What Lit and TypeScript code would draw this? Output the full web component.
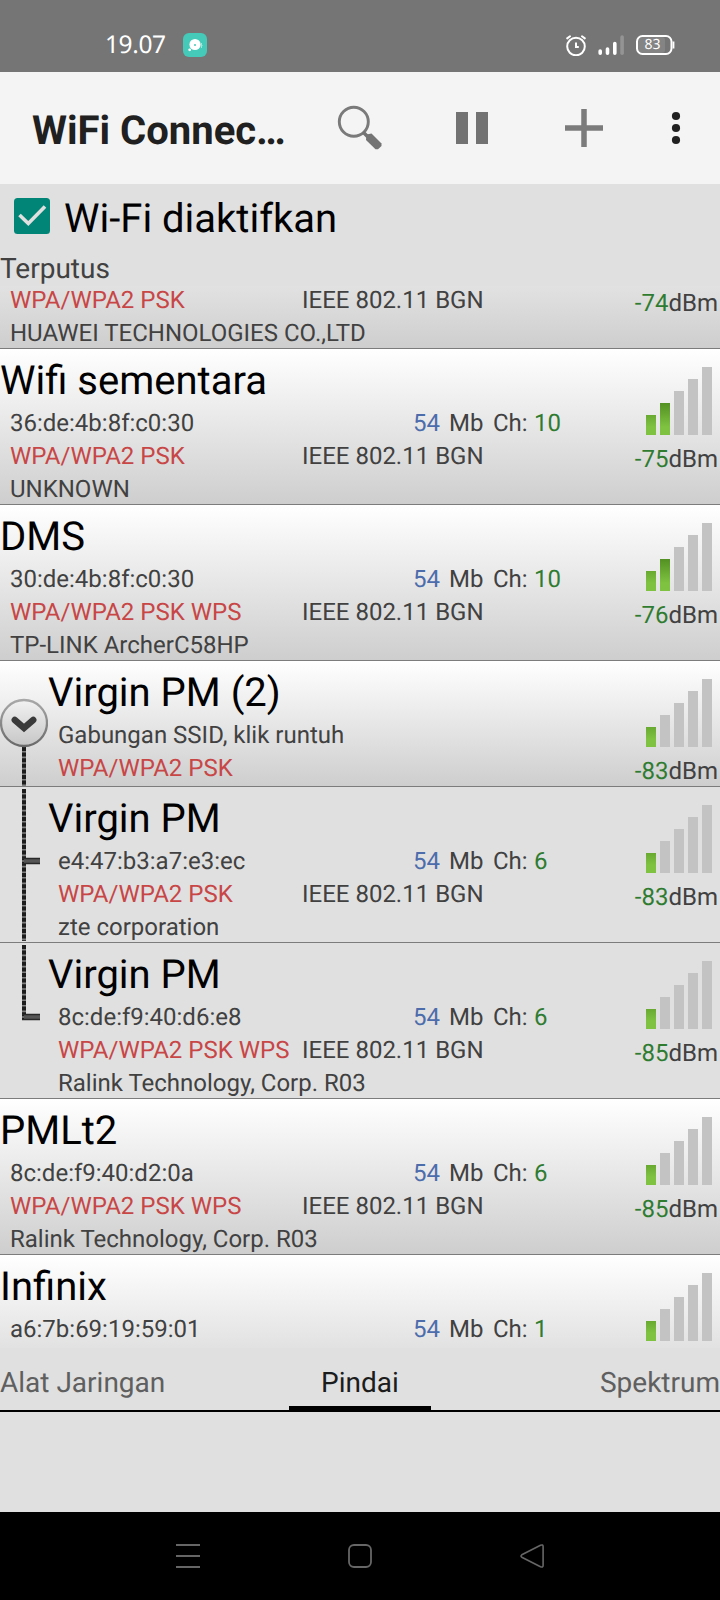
import { LitElement, html, css, svg, nothing } from "lit";
import { customElement, property } from "lit/decorators.js";

interface Network {
  name: string;
  bssid?: string;
  security?: string;
  channel?: string;
  vendor?: string;
  dbm?: number;
  level: number;
  kind?: "group" | "child" | "last";
}

const NETWORKS: Network[] = [
  { name: "", security: "WPA/WPA2 PSK", vendor: "HUAWEI TECHNOLOGIES CO.,LTD", dbm: -74, level: 2 },
  { name: "Wifi sementara", bssid: "36:de:4b:8f:c0:30", security: "WPA/WPA2 PSK", channel: "10", vendor: "UNKNOWN", dbm: -75, level: 2 },
  { name: "DMS", bssid: "30:de:4b:8f:c0:30", security: "WPA/WPA2 PSK WPS", channel: "10", vendor: "TP-LINK ArcherC58HP", dbm: -76, level: 2 },
  { name: "Virgin PM (2)", bssid: "Gabungan SSID, klik runtuh", security: "WPA/WPA2 PSK", dbm: -83, level: 1, kind: "group" },
  { name: "Virgin PM", bssid: "e4:47:b3:a7:e3:ec", security: "WPA/WPA2 PSK", channel: "6", vendor: "zte corporation", dbm: -83, level: 1, kind: "child" },
  { name: "Virgin PM", bssid: "8c:de:f9:40:d6:e8", security: "WPA/WPA2 PSK WPS", channel: "6", vendor: "Ralink Technology, Corp. R03", dbm: -85, level: 1, kind: "last" },
  { name: "PMLt2", bssid: "8c:de:f9:40:d2:0a", security: "WPA/WPA2 PSK WPS", channel: "6", vendor: "Ralink Technology, Corp. R03", dbm: -85, level: 1 },
  { name: "Infinix", bssid: "a6:7b:69:19:59:01", channel: "1", level: 1 },
];

@customElement("signal-bars")
class SignalBars extends LitElement {
  @property({ type: Number }) level = 0;
  static styles = css`
    :host { display: block; width: 66px; height: 68px; }
    svg { display: block; }
  `;
  render() {
    return html`<svg width="66" height="68" viewBox="0 0 66 68">
      <defs>
        <linearGradient id="g" gradientUnits="userSpaceOnUse" x1="0" y1="36" x2="0" y2="60">
          <stop offset="0" stop-color="#539023"></stop>
          <stop offset="1" stop-color="#7fc241"></stop>
        </linearGradient>
      </defs>
      ${[0, 1, 2, 3, 4].map((i) => {
        const h = 20 + i * 12;
        return svg`<rect x=${i * 14} y=${68 - h} width="10" height=${h} fill=${i < this.level ? "url(#g)" : "#c3c3c3"}></rect>`;
      })}
    </svg>`;
  }
}

@customElement("tree-mark")
class TreeMark extends LitElement {
  @property() kind = "";
  static styles = css`
    :host { display: block; width: 48px; flex: none; }
    svg { display: block; }
  `;
  render() {
    if (this.kind === "group") {
      return html`<svg width="48" height="125" viewBox="0 0 48 125">
        <defs>
          <linearGradient id="d" x1="0" y1="0" x2="0" y2="1">
            <stop offset="0" stop-color="#f2f2f2"></stop>
            <stop offset="1" stop-color="#c6c6c6"></stop>
          </linearGradient>
          <linearGradient id="r" x1="0" y1="0" x2="0" y2="1">
            <stop offset="0" stop-color="#a8a8a8"></stop>
            <stop offset="1" stop-color="#6a6a6a"></stop>
          </linearGradient>
        </defs>
        <path d="M24 86V125" stroke="#808080" stroke-width="4"></path>
        <path d="M24 86V125" stroke="#1c1c1c" stroke-width="4" stroke-dasharray="4 1.6"></path>
        <circle cx="24" cy="62" r="23" fill="url(#d)" stroke="url(#r)" stroke-width="2.300"></circle>
        <path d="M14.800 59L24 67L33.200 59" fill="none" stroke="#3a3a3a" stroke-width="6.500" stroke-linecap="round"></path>
      </svg>`;
    }
    const end = this.kind === "last" ? 76 : 154;
    return html`<svg width="48" height="155" viewBox="0 0 48 155">
      <path d="M24 2V${end}" stroke="#808080" stroke-width="4"></path>
      <path d="M24 2V${end}" stroke="#1c1c1c" stroke-width="4" stroke-dasharray="4 1.6"></path>
      <path d="M24 74H40" stroke="#555" stroke-width="6"></path>
      <path d="M22 71.500H40M22 76.500H40" stroke="#282828" stroke-width="1.500"></path>
    </svg>`;
  }
}

@customElement("network-row")
class NetworkRow extends LitElement {
  @property({ attribute: false }) net!: Network;
  static styles = css`
    :host { display: block; }
    .row {
      display: flex; box-sizing: border-box; height: 156px; overflow: hidden;
      border-bottom: 1px solid #7c7c7c; color: #414141;
      font: 24px/33px Roboto, sans-serif;
      background: linear-gradient(#fff, #cecece);
    }
    .group { height: 126px; }
    .child, .last { background: none; }
    .info { flex: 1; padding-top: 6px; white-space: nowrap; }
    .name { height: 52px; font-size: 40px; line-height: 52px; color: #000; }
    .line { display: flex; height: 33px; padding-left: 10px; }
    .left { width: 292px; }
    .indent .left { width: 244px; }
    .rate { display: flex; padding-left: 111px; }
    .num { width: 36px; color: #4c6cac; }
    .mb { width: 44px; }
    .ch { width: 41px; }
    .good { color: #2f7c31; }
    .red { color: #c84646; }
    .side { display: flex; flex-direction: column; align-items: flex-end; padding: 18px 2px 0 0; }
    signal-bars { margin: 0 6px 8px 0; }
  `;
  render() {
    const n = this.net;
    return html`<div class="row ${n.kind ?? ""}">
      ${n.kind ? html`<tree-mark kind=${n.kind}></tree-mark>` : nothing}
      <div class="info ${n.kind ? "indent" : ""}">
        <div class="name">${n.name}</div>
        <div class="line">
          <div class="left">${n.bssid}</div>
          ${n.channel
            ? html`<div class="rate">
                <span class="num">54</span><span class="mb">Mb</span><span class="ch">Ch:</span><span class="good">${n.channel}</span>
              </div>`
            : nothing}
        </div>
        <div class="line">
          <div class="left red">${n.security}</div>
          ${n.vendor ? html`<div>IEEE 802.11 BGN</div>` : nothing}
        </div>
        <div class="line">${n.vendor}</div>
      </div>
      <div class="side">
        <signal-bars .level=${n.level}></signal-bars>
        ${n.dbm ? html`<div><span class="good">${n.dbm}</span>dBm</div>` : nothing}
      </div>
    </div>`;
  }
}

@customElement("app-root")
class AppRoot extends LitElement {
  static styles = css`
    :host {
      display: flex; flex-direction: column; width: 720px; height: 1600px;
      background: #e0e0e0; font-family: Roboto, sans-serif; overflow: hidden;
      text-rendering: geometricPrecision;
    }
    svg { display: block; flex: none; }
    .status {
      display: flex; align-items: center; box-sizing: border-box; height: 72px;
      padding: 18px 45px 0 105px; background: #757575; color: #fff;
    }
    .time { width: 78px; font: 24.5px/34px "Noto Sans", sans-serif; letter-spacing: -0.4px; }
    .grow { flex: 1; }
    .alarm { margin-right: 11px; }
    .cell { margin-right: 11px; }
    .battery { display: grid; }
    .battery > * { grid-area: 1 / 1; }
    .pct { width: 33px; text-align: center; font: 14px/20px "Noto Sans", sans-serif; }
    .bar { display: flex; align-items: center; height: 112px; padding-left: 32px; background: #f4f4f4; }
    .title {
      width: 264px; font-size: 40px; line-height: 52px; font-weight: 700; color: #202020;
      white-space: nowrap; padding-top: 6px;
    }
    .header { height: 102px; }
    .toggle { display: flex; align-items: center; height: 64px; padding: 0 14px; gap: 14px; }
    .wifi { font-size: 40px; line-height: 52px; padding-top: 5px; color: #000; }
    .state { font-size: 28px; line-height: 42px; color: #414141; }
    .list { height: 1062px; overflow: hidden; }
    .scroll { margin-top: -93px; }
    .tabs {
      display: grid; grid-template-columns: 1fr 142px 1fr; height: 64px; box-sizing: border-box;
      border-bottom: 2px solid #000; font-size: 28px; line-height: 70px; color: #5f5f5f;
      white-space: nowrap;
    }
    .active { text-align: center; color: #1c1c1c; box-sizing: border-box; height: 62px; border-bottom: 4px solid #000; }
    .right { text-align: right; }
    .nav {
      display: flex; justify-content: center; align-items: center; gap: 148px;
      height: 88px; margin-top: 100px; background: #000;
    }
  `;
  render() {
    return html`
      <div class="status">
        <div class="time">19.07</div>
        <svg width="24" height="24" viewBox="0 0 24 24">
          <rect width="24" height="24" rx="6" fill="#45c9b8"></rect>
          <circle cx="12" cy="11.500" r="5.600" fill="#fff"></circle>
          <circle cx="12" cy="12" r="1" fill="#45c9b8"></circle>
          <circle cx="6.700" cy="16.800" r="1.400" fill="#fff"></circle>
          <path d="M18.500 10v5M17.500 12.500h2" stroke="#a5e4db" stroke-width="1"></path>
        </svg>
        <div class="grow"></div>
        <svg class="alarm" width="21" height="21" viewBox="0 0 21 21" fill="none" stroke="#fff" stroke-width="2" stroke-linecap="round">
          <circle cx="10" cy="11.500" r="8.800"></circle>
          <path d="M10 7.500V12H12.800" stroke-linecap="butt"></path>
          <path d="M1.200 3.400L4 1.300M16 1.300L18.800 3.400"></path>
        </svg>
        <svg class="cell" width="27" height="20" viewBox="0 0 27 20" stroke="#fff" stroke-width="3.600" stroke-linecap="round">
          <path d="M2.200 16V18.200M9.500 14V18.200M16.800 8.500V18.200"></path>
          <path d="M24.100 2V18.200" stroke="#949494"></path>
        </svg>
        <div class="battery">
          <svg width="39" height="20" viewBox="0 0 39 20">
            <rect x="2" y="2" width="27" height="16" rx="3" fill="#848484"></rect>
            <rect x="1" y="1" width="34.500" height="18" rx="5.500" fill="none" stroke="#fff" stroke-width="2"></rect>
            <path d="M37.500 6.500V13.500" stroke="#fff" stroke-width="1.800"></path>
          </svg>
          <div class="pct">83</div>
        </div>
      </div>
      <div class="bar">
        <div class="title">WiFi Connec…</div>
        <svg width="424" height="112" viewBox="296 72 424 112">
          <circle cx="353.800" cy="121.700" r="14.500" fill="none" stroke="#7a7a7a" stroke-width="2.900"></circle>
          <path d="M363 132L368 137" stroke="#747474" stroke-width="3.500"></path>
          <path d="M366.500 134.500L371.500 133.500L381.500 143.500L381.500 146L378 149.300L375.500 149.300L366 140Z" fill="#747474"></path>
          <path d="M456 112h12v32h-12zM476 112h12v32h-12z" fill="#727272"></path>
          <path d="M565 128H603M584 109V147" stroke="#7b7b7b" stroke-width="5.500"></path>
          <g fill="#202020">
            <circle cx="676" cy="116" r="4.100"></circle>
            <circle cx="676" cy="128" r="4.100"></circle>
            <circle cx="676" cy="140" r="4.100"></circle>
          </g>
        </svg>
      </div>
      <div class="header">
        <div class="toggle">
          <svg width="36" height="36" viewBox="0 0 36 36">
            <rect width="36" height="36" rx="3.500" fill="#008577"></rect>
            <path d="M5.500 17L14.300 25.500L31 8.500" fill="none" stroke="#e0e0e0" stroke-width="3.600"></path>
          </svg>
          <div class="wifi">Wi-Fi diaktifkan</div>
        </div>
        <div class="state">Terputus</div>
      </div>
      <div class="list">
        <div class="scroll">
          ${NETWORKS.map((n) => html`<network-row .net=${n}></network-row>`)}
        </div>
      </div>
      <div class="tabs">
        <div>Alat Jaringan</div>
        <div class="active">Pindai</div>
        <div class="right">Spektrum</div>
      </div>
      <div class="nav">
        <svg width="24" height="24" viewBox="0 0 24 24" stroke="#666" stroke-width="2">
          <path d="M0 1H24M0 12H24M0 23H24"></path>
        </svg>
        <svg width="24" height="24" viewBox="0 0 24 24" fill="none" stroke="#666" stroke-width="1.800">
          <rect x="1" y="1" width="22" height="22" rx="5"></rect>
        </svg>
        <svg width="24" height="24" viewBox="0 0 24 24" fill="none" stroke="#666" stroke-width="1.600" stroke-linejoin="round">
          <path d="M1.800 10.800L20.500 1.200Q23.100 0.300 23.100 2.500V21.500Q23.100 23.700 20.500 22.700L1.800 13.200Q0.200 12 1.800 10.800Z"></path>
        </svg>
      </div>
    `;
  }
}
